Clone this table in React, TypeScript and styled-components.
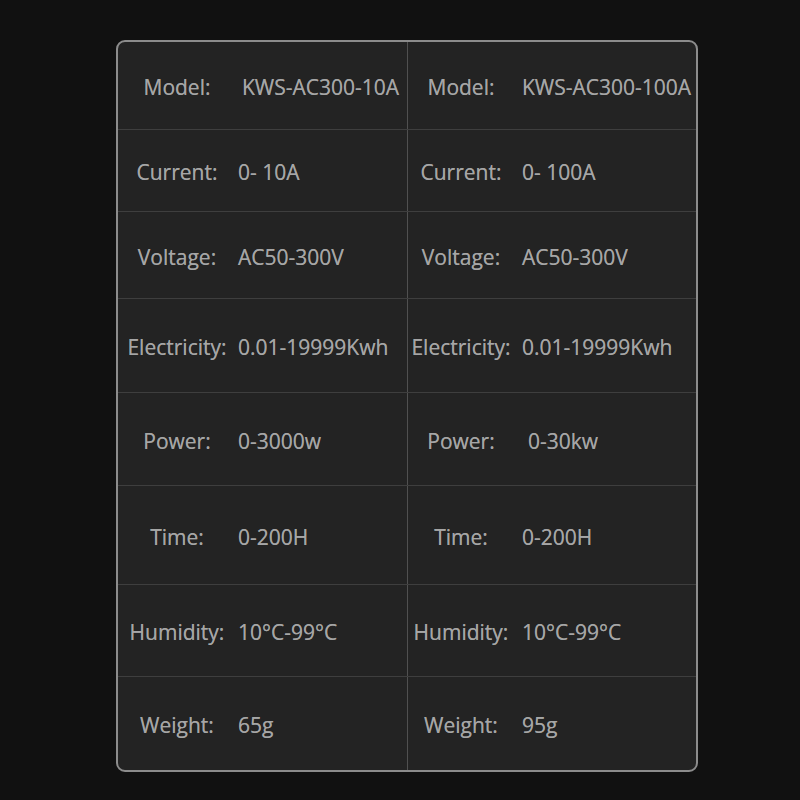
import React from 'react';
import styled, { createGlobalStyle } from 'styled-components';

const GlobalStyle = createGlobalStyle`
  html, body {
    margin: 0;
    padding: 0;
    background: #111111;
  }
  body {
    font-family: "Open Sans", "Liberation Sans", sans-serif;
  }
`;

type Spec = { label: string; a: string; b: string; height: number };

const specs: Spec[] = [
  { label: 'Model:', a: 'KWS-AC300-10A', b: 'KWS-AC300-100A', height: 88 },
  { label: 'Current:', a: '0- 10A', b: '0- 100A', height: 82 },
  { label: 'Voltage:', a: 'AC50-300V', b: 'AC50-300V', height: 87 },
  { label: 'Electricity:', a: '0.01-19999Kwh', b: '0.01-19999Kwh', height: 94 },
  { label: 'Power:', a: '0-3000w', b: '0-30kw', height: 93 },
  { label: 'Time:', a: '0-200H', b: '0-200H', height: 99 },
  { label: 'Humidity:', a: '10°C-99°C', b: '10°C-99°C', height: 92 },
  { label: 'Weight:', a: '65g', b: '95g', height: 93 },
];

const App = () => {
  return (
    <Page>
      <GlobalStyle />
      <Panel>
        {specs.map((s, i) => (
          <Row key={s.label} $height={s.height} $last={i === specs.length - 1}>
            <Cell $side="left">
              <Label>{s.label}</Label>
              <Value $nudge={s.label === 'Model:' ? 4 : 0}>{s.a}</Value>
            </Cell>
            <Cell $side="right">
              <Label>{s.label}</Label>
              <Value $nudge={s.label === 'Power:' ? 6 : 0}>{s.b}</Value>
            </Cell>
          </Row>
        ))}
      </Panel>
    </Page>
  );
};

export default App;

const Page = styled.div`
  width: 800px;
  height: 800px;
  box-sizing: border-box;
  padding: 40px 0 0 116px;
  background: #111111;
`;

const Panel = styled.section`
  box-sizing: border-box;
  width: 582px;
  display: flex;
  flex-direction: column;
  background: #232323;
  border: 2px solid #8c8c8c;
  border-radius: 9px;
  overflow: hidden;
`;

const Row = styled.div<{ $height: number; $last: boolean }>`
  box-sizing: border-box;
  height: ${p => p.$height}px;
  display: grid;
  grid-template-columns: 290px 1fr;
  border-bottom: ${p => (p.$last ? 'none' : '1px solid #3e3e3e')};
`;

const Cell = styled.div<{ $side: 'left' | 'right' }>`
  display: grid;
  grid-template-columns: ${p => (p.$side === 'left' ? '118px' : '106px')} 1fr;
  column-gap: ${p => (p.$side === 'left' ? '2px' : '8px')};
  align-items: center;
  padding-top: 3px;
  border-right: ${p => (p.$side === 'left' ? '1px solid #505050' : 'none')};
  color: #a6a6a6;
  font-size: 21px;
  white-space: nowrap;
  text-shadow: 0 0 0.6px rgba(166, 166, 166, 0.8);
`;

const Label = styled.span`
  text-align: center;
`;

const Value = styled.span<{ $nudge: number }>`
  padding-left: ${p => p.$nudge}px;
`;
